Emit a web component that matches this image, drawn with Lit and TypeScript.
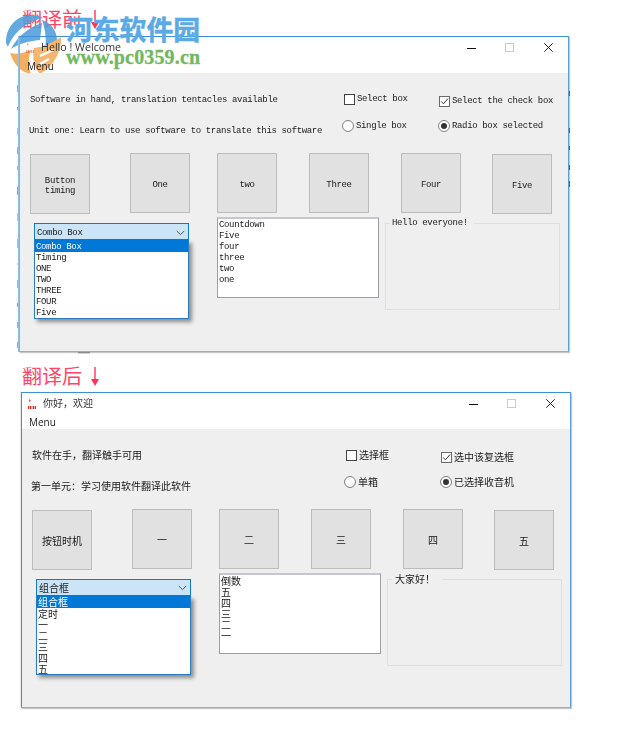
import { LitElement, html, css, svg } from "lit";
import { customElement, property } from "lit/decorators.js";

interface Form {
  title: string; text1: string; text2: string;
  check1: string; check2: string; radio1: string; radio2: string;
  buttons: string[]; combo: string; items: string[]; list: string[]; group: string;
}

const EN: Form = {
  title: "Hello ! Welcome",
  text1: "Software in hand, translation tentacles available",
  text2: "Unit one: Learn to use software to translate this software",
  check1: "Select box", check2: "Select the check box",
  radio1: "Single box", radio2: "Radio box selected",
  buttons: ["Button timing", "One", "two", "Three", "Four", "Five"],
  combo: "Combo Box",
  items: ["Combo Box", "Timing", "ONE", "TWO", "THREE", "FOUR", "Five"],
  list: ["Countdown", "Five", "four", "three", "two", "one"],
  group: "Hello everyone!",
};

const ZH: Form = {
  title: "你好，欢迎",
  text1: "软件在手，翻译触手可用",
  text2: "第一单元：学习使用软件翻译此软件",
  check1: "选择框", check2: "选中该复选框",
  radio1: "单箱", radio2: "已选择收音机",
  buttons: ["按钮时机", "一", "二", "三", "四", "五"],
  combo: "组合框",
  items: ["组合框", "定时", "一", "二", "三", "四", "五"],
  list: ["倒数", "五", "四", "三", "二", "一"],
  group: "大家好！",
};

@customElement("form-window")
class FormWindow extends LitElement {
  @property({ attribute: false }) form: Form = EN;
  @property({ type: Boolean, reflect: true }) cjk = false;

  static styles = css`
    :host {
      display: block; position: relative; z-index: 1; width: 550px; height: 316px; box-sizing: border-box;
      border: 1px solid #3d8fd6; border-right-color: #5a9fd8; border-left-color: #7db5e6;
      border-bottom: 2px solid #82b4dc; box-shadow: 1px 1px 1px rgba(0,0,0,.22), -1px 0 0 #8fc0ea;
      color: #1a1a1a; font-family: "Liberation Mono", monospace; font-size: 9px; letter-spacing: -.35px; line-height: 12px;
      filter: blur(.3px);
    }
    :host([cjk]) { border-left-color: #3d8fd6; box-shadow: 1px 1px 1px rgba(0,0,0,.22), -1px 0 1px rgba(0,0,0,.08); background: #fff; font-family: "Noto Sans CJK SC", sans-serif; font-size: 10px; letter-spacing: 0; }
    .titlebar { height: 20px; display: flex; align-items: center; padding-left: 6px; letter-spacing: 0; }
    .ico { width: 9px; height: 11px; margin-right: 6px; flex: none; opacity: .45; }
    :host([cjk]) .ico { opacity: 1; }
    .title { flex: 1; font: 10.7px/14px "Open Sans", sans-serif; color: #333; }
    :host([cjk]) .title { font: 10px/14px "Noto Sans CJK SC", sans-serif; }
    .ctl { display: block; flex: none; }
    .min { margin-right: 29px; } .max { margin-right: 30px; } .close { margin-right: 15px; }
    .menu { height: 16px; padding: 2px 0 0 7px; box-sizing: border-box; font: 10px/14px "Open Sans", sans-serif; letter-spacing: 0; color: #222; }
    .client { height: 278px; background: #efefef; box-sizing: border-box; padding-top: 18px; }
    .row { display: flex; align-items: flex-start; height: 27px; padding-left: 10px; }
    .row2 { padding-left: 9px; height: 35px; }
    .t1 { width: 314px; margin-top: 3px; }
    .t2 { width: 313px; margin-top: 7px; }
    :host([cjk]) .t1 { margin-top: 2px; }
    :host([cjk]) .t2 { margin-top: 6px; }
    .opt { display: flex; align-items: center; }
    .c1 { width: 95px; margin-top: 2px; }
    .c2 { margin-top: 4px; }
    .r1 { width: 96px; margin-top: 2px; }
    .r2 { margin-top: 2px; }
    .box { width: 11px; height: 11px; box-sizing: border-box; border: 1px solid #444; background: #fff; margin-right: 2px; flex: none; display: block; }
    .c2 .box { border-color: #6a6a6a; }
    .radio { width: 12px; height: 12px; box-sizing: border-box; border: 1px solid #808080; border-radius: 50%; background: #fff; margin-right: 2px; flex: none; display: flex; align-items: center; justify-content: center; }
    .radio i { width: 6px; height: 6px; border-radius: 50%; background: #333; }
    .buttons { display: grid; grid-template-columns: 100px 87px 92px 92px 91px 60px; padding-left: 10px; height: 64px; align-items: start; }
    button { all: unset; box-sizing: border-box; width: 60px; height: 60px; background: #e1e1e1; border: 1px solid #bcbcbc; display: flex; align-items: center; justify-content: center; text-align: center; line-height: 10px; padding: 3px 9px 0; color: #1a1a1a; }
    :host([cjk]) button { padding: 2px 8px 0; line-height: 12px; }
    .low { margin-top: 1px; }
    .lower { display: grid; grid-template-columns: 183px 168px 175px; padding-left: 14px; align-items: start; }
    .combo { width: 155px; margin-top: 6px; }
    .head { height: 17px; box-sizing: border-box; background: #cce4f7; border: 1px solid #0f7ac9; display: flex; align-items: center; justify-content: space-between; padding: 2px 3px 0 2px; }
    :host([cjk]) .head { padding-top: 1px; }
    .drop { height: 79px; box-sizing: border-box; background: #fff; border: 1px solid #2a7cc0; border-top: none; box-shadow: 3px 3px 4px rgba(0,0,0,.42); line-height: 12px; }
    .drop div { padding-left: 1px; height: 11px; }
    .drop .sel { background: #0078d7; color: #fff; height: 12px; line-height: 14px; }
    :host([cjk]) .drop .sel { line-height: 12px; }
    .list { width: 162px; height: 81px; box-sizing: border-box; background: #fff; border: 1px solid #9d9da6; border-top: 2px solid #c6c6ce; padding: 0 1px; line-height: 12px; }
    .list div { height: 11px; }
    fieldset { margin: 0; padding: 0; width: 175px; height: 93px; box-sizing: border-box; border: 1px solid #dedede; min-width: 0; }
    legend { margin-left: 4px; padding: 0 6px 0 2px; line-height: 12px; }
    :host([cjk]) legend { padding: 0 7px 0 3px; }
  `;

  private icon() {
    return html`<svg class="ico" viewBox="0 0 9 11" aria-hidden="true">
      <path d="M1 1l2 1.5L1 4z" fill="#e8452f"/>
      <path d="M0 8h1.4v3H0zM2 8h1.4v3H2zM4.6 8H6v3H4.6zM6.6 8H8v3H6.6z" fill="#d9342a"/>
    </svg>`;
  }

  render() {
    const f = this.form;
    return html`
      <div class="titlebar">
        ${this.icon()}
        <span class="title">${f.title}</span>
        <svg class="ctl min" width="9" height="9" viewBox="0 0 9 9" aria-hidden="true"><path d="M0 5.5h9" stroke="#111" stroke-width="1"/></svg>
        <svg class="ctl max" width="9" height="9" viewBox="0 0 9 9" aria-hidden="true"><rect x=".5" y=".5" width="8" height="8" fill="none" stroke="#ccc"/></svg>
        <svg class="ctl close" width="9" height="9" viewBox="0 0 9 9" aria-hidden="true"><path d="M.3.3l8.4 8.4M8.7.3L.3 8.7" stroke="#222" stroke-width="1"/></svg>
      </div>
      <div class="menu">Menu</div>
      <div class="client">
        <div class="row">
          <span class="t1">${f.text1}</span>
          <span class="opt c1"><span class="box"></span>${f.check1}</span>
          <span class="opt c2">
            <svg class="box" viewBox="0 0 9 9" aria-hidden="true"><path d="M1.2 4.4l2.2 2.4L8 1.6" fill="none" stroke="#333" stroke-width="1"/></svg>${f.check2}
          </span>
        </div>
        <div class="row row2">
          <span class="t2">${f.text2}</span>
          <span class="opt r1"><span class="radio"></span>${f.radio1}</span>
          <span class="opt r2"><span class="radio"><i></i></span>${f.radio2}</span>
        </div>
        <div class="buttons">
          ${f.buttons.map((b, i) => html`<button class=${i === 0 || i === 5 ? "low" : ""}>${b}</button>`)}
        </div>
        <div class="lower">
          <div class="combo">
            <div class="head">
              <span>${f.combo}</span>
              <svg width="9" height="6" viewBox="0 0 9 6" aria-hidden="true"><path d="M.8 1l3.7 3.6L8.2 1" fill="none" stroke="#555" stroke-width="1"/></svg>
            </div>
            <div class="drop">
              ${f.items.map((t, i) => html`<div class=${i === 0 ? "sel" : ""}>${t}</div>`)}
            </div>
          </div>
          <div class="list">${f.list.map((t) => html`<div>${t}</div>`)}</div>
          <fieldset><legend>${f.group}</legend></fieldset>
        </div>
      </div>
    `;
  }
}

const SPECKS: [number, number, number, number, string][] = [
  [17.5, 85, 1.5, 7, "#55606a"], [17.5, 107, 1.5, 3, "#444"], [17.5, 128, 1.5, 7, "#a5875a"], [17.5, 147, 1.5, 7, "#555"],
  [17.5, 166, 1.5, 4, "#4a6a8a"], [17.5, 187, 1.5, 8, "#444"], [17.5, 213, 1.5, 8, "#a5875a"], [17.5, 239, 1.5, 9, "#8a7060"],
  [17.5, 263, 1.5, 2, "#7aa"], [17.5, 280, 1.5, 8, "#667"], [17.5, 303, 1.5, 4, "#444"], [17.5, 322, 1.5, 6, "#556"], [17.5, 342, 1.5, 6, "#556"],
  [569, 91, 1, 5, "#5a7ea0"], [569, 128, 1, 5, "#5a7ea0"], [569, 146, 1, 4, "#5a7ea0"], [569, 165, 1, 5, "#5a7ea0"], [569, 181, 1, 6, "#5a7ea0"],
  [78, 352, 12, 1.5, "#b5b5b5"],
];

@customElement("app-root")
export class AppRoot extends LitElement {
  static styles = css`
    :host { display: block; position: relative; width: 644px; height: 733px; overflow: hidden; background: #fff; }
    .cap { display: flex; align-items: flex-start; height: 36px; box-sizing: border-box; padding: 9px 0 0 22px; color: #ff4467; font: 20px/20px "Noto Sans CJK SC", sans-serif; }
    .cap.second { height: 40px; padding-top: 14px; }
    .cap svg { margin: 1px 0 0 8px; display: block; }
    .w1 { margin-left: 19px; }
    .w2 { margin-left: 21px; }
    .specks { position: absolute; left: 0; top: 0; }
    .logo { position: absolute; left: 4px; top: 14px; opacity: .88; }
    .mark { position: absolute; z-index: 2; left: 66px; top: 12px; color: #5aaae6; font: 700 26.8px/34px "Noto Sans CJK SC", sans-serif; -webkit-text-stroke: .5px #5aaae6; white-space: nowrap; }
    .url { position: absolute; z-index: 2; left: 66px; top: 45px; color: #72b85e; font: 700 20px/24px "Liberation Serif", serif; letter-spacing: .15px; -webkit-text-stroke: .3px #72b85e; white-space: nowrap; }
  `;

  private arrow(h: number) {
    return html`<svg width="10" height=${h} viewBox="0 0 10 ${h}" aria-hidden="true">
      <path d="M5 0V${h - 5}" stroke="#ff3358" stroke-width="1.4"/>
      <path d="M1 ${h - 7}H9L5 ${h}z" fill="#ff3358"/>
    </svg>`;
  }

  render() {
    return html`
      <div class="cap">翻译前${this.arrow(19)}</div>
      <svg class="logo" width="58" height="62" viewBox="0 0 58 62" aria-hidden="true">
        <path d="M2 28C2 12 14 1 27 1c5 0 9 1 12 3C26 7 11 15 4 33c-1-2-2-3-2-5z" fill="#4f9fdc"/>
        <path d="M7 35C13 23 25 13 38 9l-2 17C24 27 14 30 7 35z" fill="#4f9fdc"/>
        <path d="M38 6c9 3 15 11 15 20 0 4-1 7-3 10l-10 2c3-9 2-20-2-32z" fill="#4f9fdc"/>
        <path d="M6 39c6 2 14 0 21-3-3 9-3 16 0 24C16 58 10 50 6 39z" fill="#f2a548"/>
        <path d="M30 34c9-1 18-5 27-11 1 14-7 29-21 37-6-6-8-16-6-26z" fill="#f4ae5c"/>
        <path d="M36 42l13-6M36 50l9-5" stroke="#fff" stroke-width="2.4"/>
      </svg>
      <form-window class="w1" .form=${EN}></form-window>
      <div class="cap second">翻译后${this.arrow(19)}</div>
      <form-window class="w2" cjk .form=${ZH}></form-window>

      <svg class="specks" width="644" height="360" aria-hidden="true">
        ${SPECKS.map(([x, y, w, h, c]) => svg`<rect x=${x} y=${y} width=${w} height=${h} fill=${c}/>`)}
      </svg>
      <div class="mark">河东软件园</div>
      <div class="url">www.pc0359.cn</div>
    `;
  }
}
